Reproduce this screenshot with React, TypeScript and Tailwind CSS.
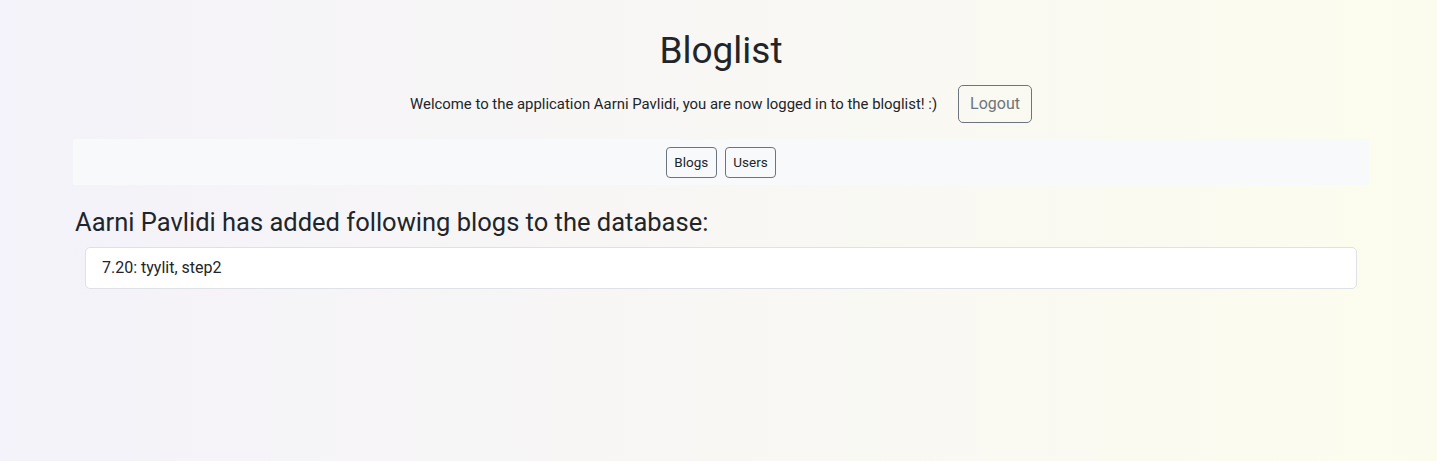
function NavButton(props: { label: string }) {
  return (
    <button className="h-[31px] px-[7.5px] border border-[#6c757d] rounded-[4px] text-[13.5px] text-[#212529] bg-transparent">
      {props.label}
    </button>
  );
}

export default function App() {
  const blogs = [{ id: 1, title: "7.20: tyylit, step2" }];

  return (
    <div className="min-h-[461px] w-full pl-[5px] bg-gradient-to-r from-[#f4f2fa] to-[#fcfcee] text-[#212529] font-['Roboto',sans-serif]">
      <div className="max-w-[1296px] mx-auto">
        <h1 className="pt-[28px] text-center text-[37px] leading-[46px] font-normal">
          Bloglist
        </h1>
        <div className="mt-[11px] flex items-center justify-center gap-[21px]">
          <p className="text-[14.9px]">
            Welcome to the application Aarni Pavlidi, you are now logged in to
            the bloglist! :)
          </p>
          <button className="h-[38px] px-[11px] border border-[#6c757d] rounded-[5px] text-[16px] text-[#6c757d]">
            Logout
          </button>
        </div>
        <nav className="mt-[16px] h-[46px] bg-[#f8f9fa] flex items-center justify-center gap-[8px]">
          <NavButton label="Blogs" />
          <NavButton label="Users" />
        </nav>
        <h2 className="mt-[20px] ml-[2px] text-[25.5px] leading-[34px] font-normal">
          Aarni Pavlidi has added following blogs to the database:
        </h2>
        <ul className="mt-[8px] mx-[12px]">
          {blogs.map((blog) => (
            <li
              key={blog.id}
              className="bg-white border border-[#dee2e6] rounded-[5px] px-[16px] h-[42px] flex items-center text-[16px]"
            >
              {blog.title}
            </li>
          ))}
        </ul>
      </div>
    </div>
  );
}
